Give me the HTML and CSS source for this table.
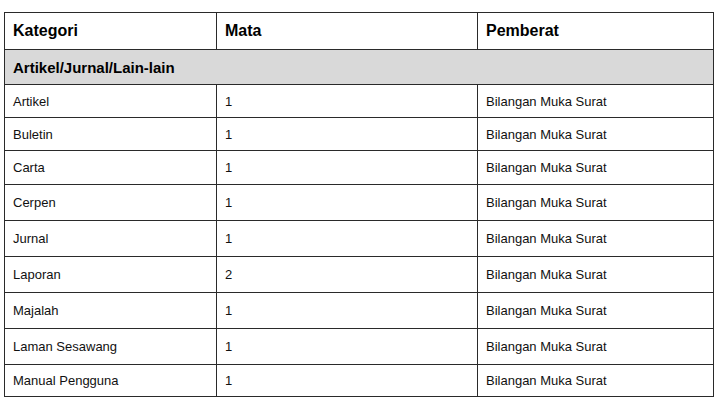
FILE: index.html
```html
<!DOCTYPE html>
<html lang="ms">
<head>
<meta charset="utf-8">
<title>Kategori</title>
<link rel="stylesheet" href="styles.css">
</head>
<body>
<table class="grid">
  <colgroup>
    <col class="c1"><col class="c2"><col class="c3">
  </colgroup>
  <thead>
    <tr class="head"><th>Kategori</th><th>Mata</th><th>Pemberat</th></tr>
  </thead>
  <tbody>
    <tr class="group"><td colspan="3">Artikel/Jurnal/Lain-lain</td></tr>
    <tr class="r33"><td>Artikel</td><td>1</td><td>Bilangan Muka Surat</td></tr>
    <tr class="r33"><td>Buletin</td><td>1</td><td>Bilangan Muka Surat</td></tr>
    <tr class="r34"><td>Carta</td><td>1</td><td>Bilangan Muka Surat</td></tr>
    <tr class="r36"><td>Cerpen</td><td>1</td><td>Bilangan Muka Surat</td></tr>
    <tr class="r36"><td>Jurnal</td><td>1</td><td>Bilangan Muka Surat</td></tr>
    <tr class="r36"><td>Laporan</td><td>2</td><td>Bilangan Muka Surat</td></tr>
    <tr class="r36"><td>Majalah</td><td>1</td><td>Bilangan Muka Surat</td></tr>
    <tr class="r36"><td>Laman Sesawang</td><td>1</td><td>Bilangan Muka Surat</td></tr>
    <tr class="r32"><td>Manual Pengguna</td><td>1</td><td>Bilangan Muka Surat</td></tr>
  </tbody>
</table>
</body>
</html>
```
FILE: styles.css
```css
html, body {
  margin: 0;
  padding: 0;
  background: #ffffff;
}
body {
  padding: 12px 0 0 4px;
  font-family: "Liberation Sans", Arial, sans-serif;
  color: #111;
}
.grid {
  border-collapse: collapse;
  table-layout: fixed;
  width: 709px;
  border: 1px solid #2a2a2a;
}
.c1 { width: 212px; }
.c2 { width: 261px; }
.c3 { width: 236px; }
.grid th, .grid td {
  border: 1px solid #2a2a2a;
  padding: 0 0 0 8px;
  text-align: left;
  vertical-align: middle;
  box-sizing: border-box;
}
.grid .head th {
  height: 37px;
  font-size: 16px;
  font-weight: bold;
  color: #000;
}
.grid tbody td { font-size: 13px; }
.grid .group td {
  height: 35px;
  background: #d9d9d9;
  font-size: 15px;
  font-weight: bold;
  color: #000;
}
.r32 td { height: 32px; }
.r33 td { height: 33px; }
.r34 td { height: 34px; }
.r36 td { height: 36px; }
```
